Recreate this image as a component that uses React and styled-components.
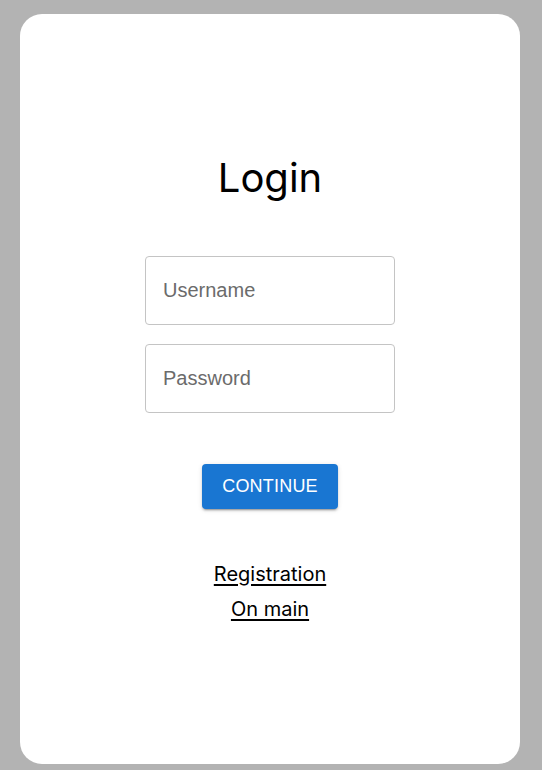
import React from "react";
import styled, { createGlobalStyle } from "styled-components";

const Global = createGlobalStyle`
  html, body { margin: 0; padding: 0; background: #b3b3b3; }
  body { font-family: Inter, "Liberation Sans", sans-serif; }
  * { box-sizing: border-box; }
`;

const Page = styled.div`
  padding: 14px 22px 6px 20px;
  min-height: 770px;
`;

const Card = styled.div`
  width: 500px;
  height: 750px;
  padding-top: 2px;
  background: #fff;
  border-radius: 22px;
  display: flex;
  flex-direction: column;
  align-items: center;
  justify-content: center;
`;

const Title = styled.h1`
  margin: 0 0 54px;
  font-family: Inter, sans-serif;
  font-weight: 400;
  font-size: 40px;
  line-height: 48px;
  color: #000;
`;

const Fields = styled.div`
  display: flex;
  flex-direction: column;
  gap: 19px;
  width: 250px;
`;

const Input = styled.input`
  width: 250px;
  height: 69px;
  border: 1px solid #c4c4c4;
  border-radius: 4px;
  padding: 0 17px;
  font-family: "Liberation Sans", Arial, sans-serif;
  font-size: 20px;
  color: #000;
  outline: none;
  &::placeholder { color: #6b6b6b; opacity: 1; }
`;

const Button = styled.button`
  margin-top: 51px;
  height: 45px;
  padding: 0 20px;
  border: none;
  border-radius: 4px;
  background: #1976d2;
  color: #fff;
  font-family: "Liberation Sans", Arial, sans-serif;
  font-size: 18px;
  letter-spacing: 0.2px;
  box-shadow: 0 3px 1px -2px rgba(0,0,0,0.2), 0 2px 2px 0 rgba(0,0,0,0.14), 0 1px 5px 0 rgba(0,0,0,0.12);
  cursor: pointer;
`;

const Links = styled.div`
  margin-top: 48px;
  display: flex;
  flex-direction: column;
  align-items: center;
`;

const LinkText = styled.a`
  font-family: Inter, sans-serif;
  font-size: 20px;
  line-height: 35px;
  color: #000;
  text-decoration: underline;
  text-underline-offset: 3px;
`;

export default function App() {
  return (
    <>
      <Global />
      <Page>
        <Card>
          <Title>Login</Title>
          <Fields>
            <Input placeholder="Username" />
            <Input type="password" placeholder="Password" />
          </Fields>
          <Button>CONTINUE</Button>
          <Links>
            <LinkText href="#">Registration</LinkText>
            <LinkText href="#">On main</LinkText>
          </Links>
        </Card>
      </Page>
    </>
  );
}
